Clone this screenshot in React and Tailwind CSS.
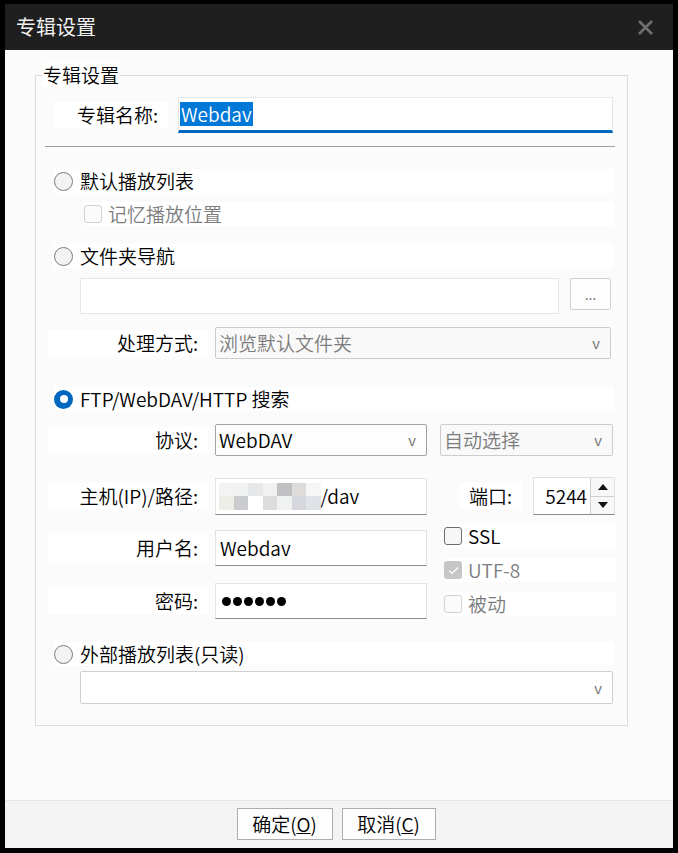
import React from 'react';

const font = "font-['Noto_Sans_CJK_SC','Noto_Sans',sans-serif]";

const Radio = ({ checked }) =>
  checked ? (
    <span className="flex h-[19px] w-[19px] shrink-0 items-center justify-center rounded-full bg-[#0067c0]">
      <span className="h-[8px] w-[8px] rounded-full bg-white" />
    </span>
  ) : (
    <span className="h-[19px] w-[19px] shrink-0 rounded-full border border-[#7b7b7b] bg-[#f3f3f3]" />
  );

const Check = ({ checked, disabled }) => {
  if (checked) {
    return (
      <span className="flex h-[18px] w-[18px] shrink-0 items-center justify-center rounded-[3px] bg-[#c6c6c6]">
        <svg width="11" height="9" viewBox="0 0 11 9" fill="none">
          <path d="M1 4.5 L4 7.5 L10 1.5" stroke="#ffffff" strokeWidth="1.2" />
        </svg>
      </span>
    );
  }
  return (
    <span
      className={
        disabled
          ? 'h-[18px] w-[18px] shrink-0 rounded-[3px] border border-[#d2d2d2] bg-[#fbfbfb]'
          : 'h-[18px] w-[18px] shrink-0 rounded-[3px] border border-[#6e6e6e] bg-[#f6f6f6]'
      }
    />
  );
};

const Label = ({ children, className = '' }) => (
  <div className={`flex h-[26px] items-center justify-end bg-white pr-[10px] ${className}`}>{children}</div>
);

const TextBox = ({ className = '', children }) => (
  <div
    className={`flex items-center border border-[#e3e3e3] border-b-[#8a8a8a] bg-white px-[4px] ${className}`}
  >
    {children}
  </div>
);

const Combo = ({ className = '', children, disabled }) => (
  <div
    className={`flex items-center justify-between rounded-[2px] border pl-[3px] pr-[10px] ${
      disabled ? 'border-[#cccccc] bg-[#f9f9f9] text-[#7c7c7c]' : 'border-[#a3a3a3] bg-[#fdfdfd]'
    } ${className}`}
  >
    <span>{children}</span>
    <span className="text-[15px] text-[#6b6b6b]">v</span>
  </div>
);

const mosaic = [
  ['#f3f3f3', '#f1f2f2', '#e6e7e8', '#f1f1f1', '#c0c0c3', '#dddcda', '#f6f6f6'],
  ['#eeeee9', '#cbccd0', '#ffffff', '#dcdcdd', '#f0f1f1', '#d5d7dc', '#dfe3e7'],
];

export default function App() {
  return (
    <div className={`flex h-[853px] w-[678px] flex-col bg-black pb-[5px] pl-[5px] pr-[5px] pt-[4px] text-[19px] font-[350] leading-[24px] text-black ${font}`}>
      {/* title bar */}
      <div className="flex h-[46px] shrink-0 items-center justify-between bg-[#1f1f1f] pl-[11px] pr-[19px]">
        <span className="text-[20px] font-normal text-[#f2f2f2]">专辑设置</span>
        <svg width="17" height="17" viewBox="0 0 17 17">
          <path d="M2 2 L15 15 M15 2 L2 15" stroke="#707070" strokeWidth="2.6" />
        </svg>
      </div>

      {/* body */}
      <div className="flex-1 bg-[#fbfbfb] pl-[30px]">
        <fieldset className="mt-[13px] w-[593px] border border-[#dcdcdc] pb-[21px]">
          <legend className="ml-[6px] bg-white px-px leading-[24px]">专辑设置</legend>

          {/* name */}
          <div className="mt-[10px] flex h-[36px] items-center">
            <Label className="ml-[17px] w-[115px]">专辑名称:</Label>
            <div className="ml-[10px] flex h-[36px] w-[435px] items-center border border-[#e6e6e6] border-b-[3px] border-b-[#0067c0] bg-white px-[1px]">
              <span className="bg-[#0078d7] px-[1px] text-white">Webdav</span>
            </div>
          </div>

          <div className="ml-[9px] mt-[13px] h-px w-[570px] bg-[#a0a0a0]" />

          {/* default playlist */}
          <div className="ml-[18px] mt-[22px] flex h-[24px] w-[560px] items-center gap-[7px] bg-white">
            <Radio />
            <span>默认播放列表</span>
          </div>
          <div className="ml-[48px] mt-[9px] flex h-[24px] w-[530px] items-center gap-[6px] bg-white text-[#7c7c7c]">
            <Check disabled />
            <span>记忆播放位置</span>
          </div>

          {/* folder */}
          <div className="ml-[18px] mt-[18px] flex h-[24px] w-[560px] items-center gap-[7px] bg-white">
            <Radio />
            <span>文件夹导航</span>
          </div>
          <div className="ml-[44px] mt-[10px] flex items-start">
            <div className="h-[36px] w-[479px] border border-[#e6e6e6] bg-white" />
            <div className="ml-[11px] flex h-[32px] w-[41px] items-center justify-center rounded-[2px] border border-[#cfcfcf] bg-[#fdfdfd] text-[14px] text-[#555]">
              ...
            </div>
          </div>
          <div className="mt-[13px] flex h-[32px] items-center">
            <Label className="ml-[12px] w-[160px]">处理方式:</Label>
            <Combo disabled className="ml-[7px] h-[32px] w-[396px]">
              浏览默认文件夹
            </Combo>
          </div>

          {/* ftp */}
          <div className="ml-[18px] mt-[28px] flex h-[24px] w-[560px] items-center gap-[7px] bg-white">
            <Radio checked />
            <span>FTP/WebDAV/HTTP 搜索</span>
          </div>
          <div className="mt-[13px] flex h-[32px] items-center">
            <Label className="ml-[12px] w-[160px]">协议:</Label>
            <Combo className="ml-[7px] h-[32px] w-[212px]">WebDAV</Combo>
            <Combo disabled className="ml-[13px] h-[32px] w-[173px]">
              自动选择
            </Combo>
          </div>
          <div className="mt-[21px] flex h-[38px] items-center">
            <Label className="ml-[12px] w-[160px]">主机(IP)/路径:</Label>
            <TextBox className="ml-[7px] h-[37px] w-[212px] pl-[3px]">
              <div className="grid grid-cols-[repeat(7,14.5px)] grid-rows-[repeat(2,13.5px)]">
                {mosaic.flat().map((c, i) => (
                  <div key={i} style={{ backgroundColor: c }} />
                ))}
              </div>
              <span>/dav</span>
            </TextBox>
            <Label className="ml-[33px] w-[62px]">端口:</Label>
            <div className="ml-[11px] flex h-[38px] w-[82px] border border-[#e0e0e0] border-b-[#8a8a8a] bg-white">
              <div className="flex flex-1 items-center justify-end pr-[3px]">5244</div>
              <div className="flex w-[24px] flex-col border-l border-[#d0d0d0]">
                <div className="flex flex-1 items-center justify-center border-b border-[#d0d0d0] bg-[#f7f7f7]">
                  <svg width="10" height="6" viewBox="0 0 10 6">
                    <path d="M0 6 L5 0 L10 6 Z" fill="#111" />
                  </svg>
                </div>
                <div className="flex flex-1 items-center justify-center bg-[#f7f7f7]">
                  <svg width="10" height="6" viewBox="0 0 10 6">
                    <path d="M0 0 L10 0 L5 6 Z" fill="#111" />
                  </svg>
                </div>
              </div>
            </div>
          </div>

          <div className="flex">
            <div className="flex flex-col">
              <div className="mt-[15px] flex h-[36px] items-center">
                <Label className="ml-[12px] w-[160px]">用户名:</Label>
                <TextBox className="ml-[7px] h-[36px] w-[212px]">Webdav</TextBox>
              </div>
              <div className="mt-[17px] flex h-[36px] items-center">
                <Label className="ml-[12px] w-[160px]">密码:</Label>
                <TextBox className="ml-[7px] h-[36px] w-[212px] gap-[2px] pl-[6px]">
                  {[0, 1, 2, 3, 4, 5].map((i) => (
                    <span key={i} className="h-[9px] w-[9px] rounded-full bg-black" />
                  ))}
                </TextBox>
              </div>
            </div>
            <div className="ml-[17px] flex flex-col">
              <div className="mt-[9px] flex h-[24px] w-[172px] items-center gap-[6px] bg-white">
                <Check />
                <span>SSL</span>
              </div>
              <div className="mt-[10px] flex h-[24px] w-[172px] items-center gap-[6px] bg-white text-[#7c7c7c]">
                <Check checked disabled />
                <span>UTF-8</span>
              </div>
              <div className="mt-[10px] flex h-[24px] w-[172px] items-center gap-[6px] bg-white text-[#7c7c7c]">
                <Check disabled />
                <span>被动</span>
              </div>
            </div>
          </div>

          {/* external */}
          <div className="ml-[18px] mt-[23px] flex h-[24px] w-[560px] items-center gap-[7px] bg-white">
            <Radio />
            <span>外部播放列表(只读)</span>
          </div>
          <Combo className="ml-[44px] mt-[5px] h-[33px] w-[533px] border-[#cfcfcf] bg-white" />
        </fieldset>
      </div>

      {/* footer */}
      <div className="flex h-[48px] shrink-0 items-start justify-center gap-[9px] border-t border-[#e5e5e5] bg-[#f3f3f3] pr-[6px] pt-[7px]">
        <button className="h-[32px] w-[96px] border border-[#adadad] bg-[#fdfdfd] text-[19px]">
          确定(<span className="underline">O</span>)
        </button>
        <button className="h-[32px] w-[94px] border border-[#adadad] bg-[#fdfdfd] text-[19px]">
          取消(<span className="underline">C</span>)
        </button>
      </div>
    </div>
  );
}
